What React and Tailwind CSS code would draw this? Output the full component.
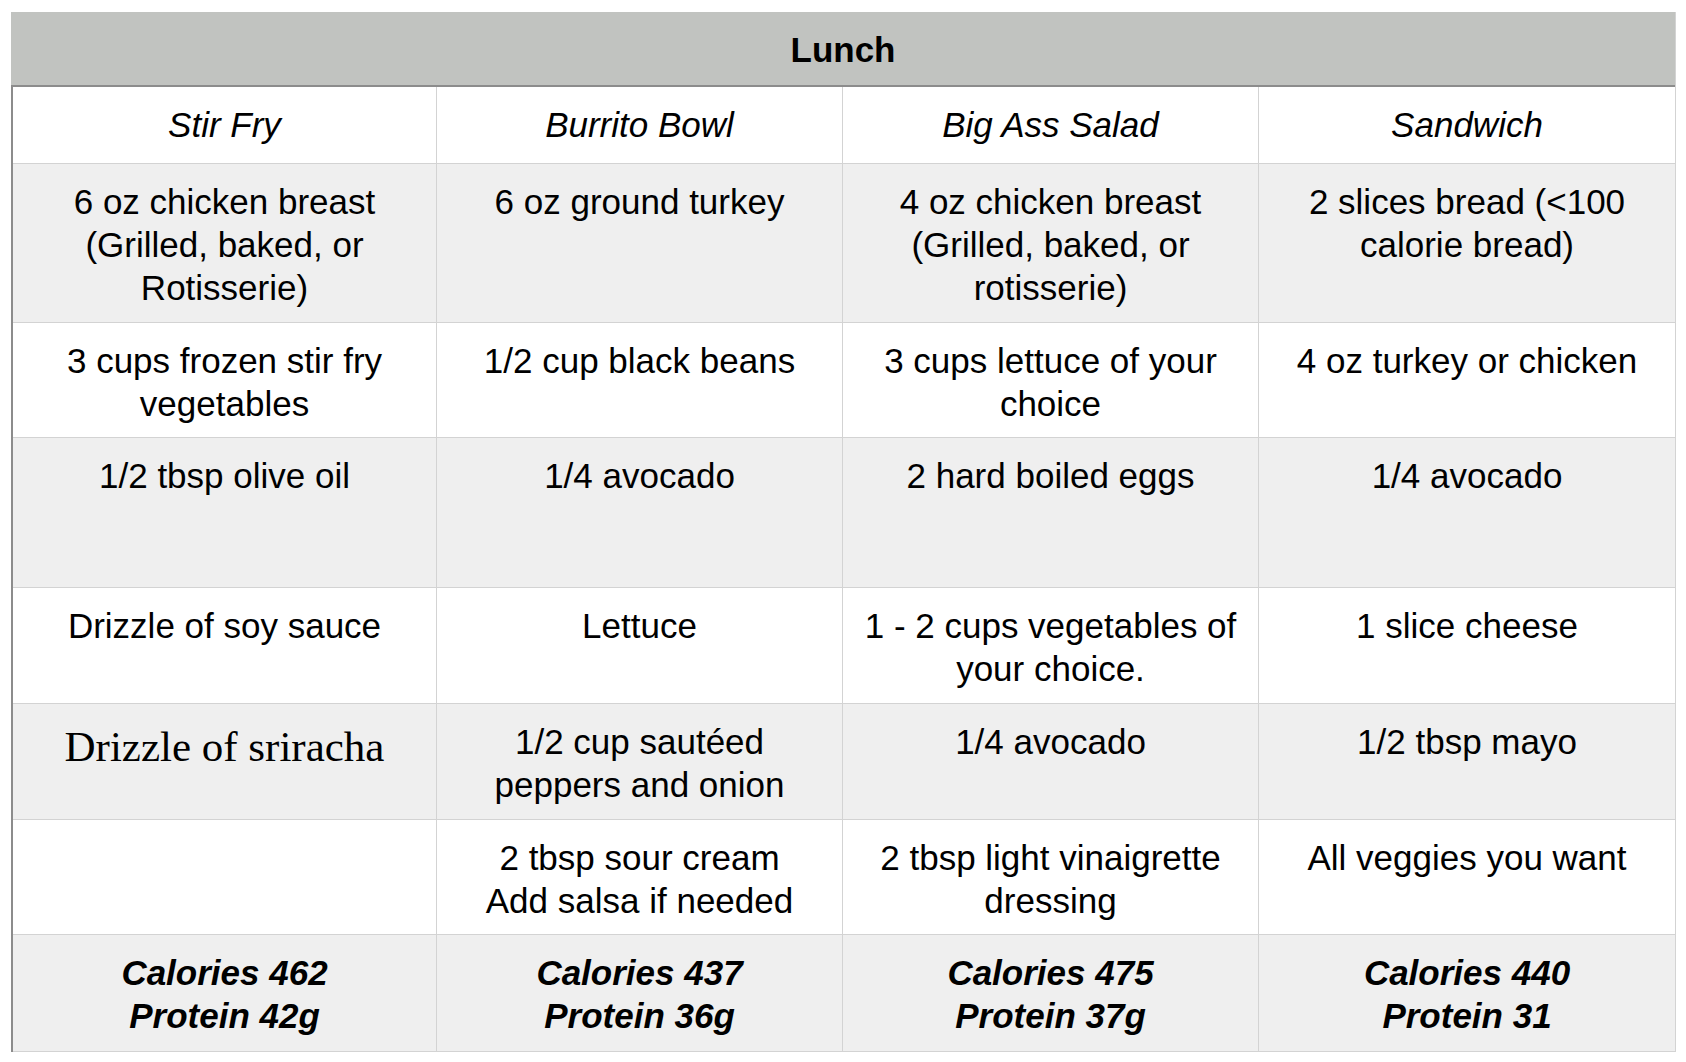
import React from 'react'

// Lunch options sheet — four meals side by side, one ingredient per row.
// first column loses 2px to the dark left rule, last one 1px to the right rule
const COLS = ['w-[424px]', 'w-[406px]', 'w-[416px]', 'w-[416px]']

const NAMES = ['Stir Fry', 'Burrito Bowl', 'Big Ass Salad', 'Sandwich']

// each row: height, striped?, cells (array of lines per column)
const ROWS = [
  {
    h: 'h-[159px]',
    gray: true,
    cells: [
      ['6 oz chicken breast', '(Grilled, baked, or', 'Rotisserie)'],
      ['6 oz ground turkey'],
      ['4 oz chicken breast', '(Grilled, baked, or', 'rotisserie)'],
      ['2 slices bread (<100', 'calorie bread)'],
    ],
  },
  {
    h: 'h-[115px]',
    gray: false,
    cells: [
      ['3 cups frozen stir fry', 'vegetables'],
      ['1/2 cup black beans'],
      ['3 cups lettuce of your', 'choice'],
      ['4 oz turkey or chicken'],
    ],
  },
  {
    h: 'h-[150px]',
    gray: true,
    cells: [['1/2 tbsp olive oil'], ['1/4 avocado'], ['2 hard boiled eggs'], ['1/4 avocado']],
  },
  {
    h: 'h-[116px]',
    gray: false,
    cells: [
      ['Drizzle of soy sauce'],
      ['Lettuce'],
      ['1 - 2 cups vegetables of', 'your choice.'],
      ['1 slice cheese'],
    ],
  },
  {
    h: 'h-[116px]',
    gray: true,
    serifFirst: true,
    cells: [
      ['Drizzle of sriracha'],
      ['1/2 cup sautéed', 'peppers and onion'],
      ['1/4 avocado'],
      ['1/2 tbsp mayo'],
    ],
  },
  {
    h: 'h-[115px]',
    gray: false,
    cells: [
      [],
      ['2 tbsp sour cream', 'Add salsa if needed'],
      ['2 tbsp light vinaigrette', 'dressing'],
      ['All veggies you want'],
    ],
  },
]

const TOTALS = [
  ['Calories 462', 'Protein 42g'],
  ['Calories 437', 'Protein 36g'],
  ['Calories 475', 'Protein 37g'],
  ['Calories 440', 'Protein 31'],
]

function Cell({ col, last, children, className = '' }) {
  return (
    <div
      className={`${COLS[col]} shrink-0 h-full pt-[16px] flex flex-col items-center text-center ${
        last ? '' : 'border-r border-[#d3d3d3]'
      } ${className}`}
    >
      {children}
    </div>
  )
}

function Lines({ lines }) {
  return lines.map((l, i) => (
    <div key={i} className="whitespace-nowrap leading-[43px]">
      {l}
    </div>
  ))
}

export default function App() {
  return (
    <div className="w-[1686px] h-[1062px] bg-white pt-[12px] pl-[11px] text-black text-[35px] font-['Liberation_Sans',Arial,sans-serif]">
      <div className="w-[1665px] border-r border-[#d3d3d3]">
        {/* title bar */}
        <div className="h-[75px] bg-[#c1c3c0] border-b-2 border-[#8c8c8c] flex justify-center pt-[16px]">
          <div className="font-bold leading-[43px]">Lunch</div>
        </div>

        <div className="border-l-2 border-[#8c8c8c]">
          {/* meal names */}
          <div className="flex h-[77px] bg-white border-b border-[#d3d3d3]">
            {NAMES.map((n, i) => (
              <Cell key={n} col={i} last={i === 3}>
                <div className="italic leading-[43px] whitespace-nowrap">{n}</div>
              </Cell>
            ))}
          </div>

          {ROWS.map((r, ri) => (
            <div
              key={ri}
              className={`flex ${r.h} border-b border-[#d3d3d3] ${r.gray ? 'bg-[#efefef]' : 'bg-white'}`}
            >
              {r.cells.map((lines, ci) =>
                r.serifFirst && ci === 0 ? (
                  <Cell key={ci} col={ci}>
                    <div className="font-['Liberation_Serif','Times_New_Roman',serif] text-[43px] leading-[50px] whitespace-nowrap mt-[2px]">
                      {lines[0]}
                    </div>
                  </Cell>
                ) : (
                  <Cell key={ci} col={ci} last={ci === 3}>
                    <Lines lines={lines} />
                  </Cell>
                )
              )}
            </div>
          ))}

          {/* totals */}
          <div className="flex h-[117px] bg-[#efefef] border-b border-[#d3d3d3]">
            {TOTALS.map((lines, i) => (
              <Cell key={i} col={i} last={i === 3} className="font-bold italic">
                <Lines lines={lines} />
              </Cell>
            ))}
          </div>
        </div>
      </div>
    </div>
  )
}
